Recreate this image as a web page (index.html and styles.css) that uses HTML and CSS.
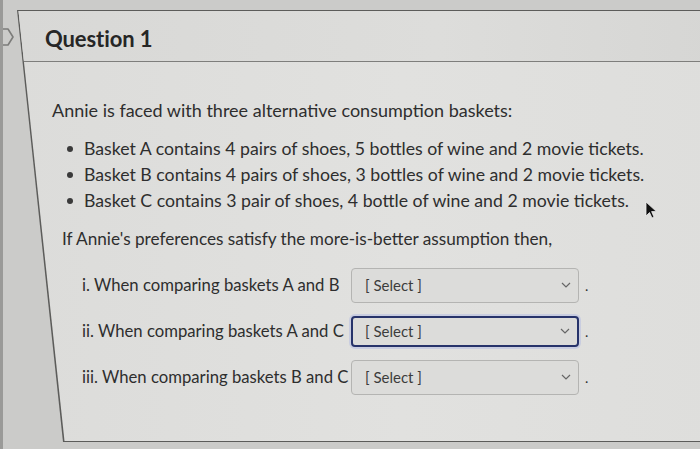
FILE: index.html
```html
<!DOCTYPE html>
<html lang="en">
<head>
<meta charset="utf-8">
<title>Question 1</title>
<link rel="stylesheet" href="styles.css">
</head>
<body>
<div class="page">
  <div class="rail">
    <svg class="rail-icon" width="12" height="20" viewBox="0 0 12 20">
      <path d="M-2 2 L5 2 L10 10 L5 18 L-2 18" fill="none" stroke="#7c7c7a" stroke-width="1.6" stroke-linejoin="round"/>
    </svg>
  </div>
  <div class="card">
    <div class="card-inner">
      <div class="card-header">
        <h2 class="title">Question 1</h2>
      </div>
      <div class="card-body">
        <p class="intro">Annie is faced with three alternative consumption baskets:</p>
        <ul class="baskets">
          <li>Basket A contains 4 pairs of shoes, 5 bottles of wine and 2 movie tickets.</li>
          <li>Basket B contains 4 pairs of shoes, 3 bottles of wine and 2 movie tickets.</li>
          <li>Basket C contains 3 pair of shoes, 4 bottle of wine and 2 movie tickets.</li>
        </ul>
        <p class="lead">If Annie's preferences satisfy the more-is-better assumption then,</p>
        <div class="rows">
          <div class="row">
            <span class="label">i. When comparing baskets A and B</span>
            <span class="select"><span>[ Select ]</span><svg class="chev" width="10" height="6" viewBox="0 0 10 6"><path d="M1 1 L5 5 L9 1" fill="none" stroke="#666" stroke-width="1.2"/></svg></span>
            <span class="dot">.</span>
          </div>
          <div class="row">
            <span class="label">ii. When comparing baskets A and C</span>
            <span class="select focused"><span>[ Select ]</span><svg class="chev" width="10" height="6" viewBox="0 0 10 6"><path d="M1 1 L5 5 L9 1" fill="none" stroke="#666" stroke-width="1.2"/></svg></span>
            <span class="dot">.</span>
          </div>
          <div class="row">
            <span class="label">iii. When comparing baskets B and C</span>
            <span class="select"><span>[ Select ]</span><svg class="chev" width="10" height="6" viewBox="0 0 10 6"><path d="M1 1 L5 5 L9 1" fill="none" stroke="#666" stroke-width="1.2"/></svg></span>
            <span class="dot">.</span>
          </div>
        </div>
      </div>
    </div>
  </div>
</div>
<svg class="cursor" width="14" height="20" viewBox="0 0 14 20">
  <path d="M1 1 L1 15 L4.5 11.5 L7 17 L9 16 L6.6 10.6 L11.5 10.6 Z" fill="#111" stroke="#eee" stroke-width="0.8"/>
</svg>
</body>
</html>
```
FILE: styles.css
```css
html, body {
  margin: 0;
  padding: 0;
}
body {
  width: 700px;
  height: 449px;
  overflow: hidden;
  background: #cbcbc9;
  font-family: "Lato", "Liberation Sans", sans-serif;
  color: #2e2e2e;
  position: relative;
}
.page {
  display: flex;
  height: 449px;
  border-left: 3px solid #9a9a98;
}
.rail {
  width: 14px;
  flex: none;
  padding-top: 27px;
}
.rail-icon {
  display: block;
}
.card {
  flex: none;
  width: 700px;
  margin-top: 10px;
  height: 432px;
  background: #5c5c5a;
  clip-path: polygon(0 0, 100% 0, 100% 100%, 46px 100%);
  padding: 1px 0;
  box-sizing: border-box;
}
.card-inner {
  height: 100%;
  background: linear-gradient(90deg, #dcdcda 0%, #e1e1df 55%, #dededc 100%);
  clip-path: polygon(1.5px 0, 100% 0, 100% 100%, 47.5px 100%);
}
.card-header {
  height: 51px;
  box-sizing: border-box;
  border-bottom: 1px solid #7e7e7c;
  background: linear-gradient(90deg, #d8d8d6 0%, #dddddb 60%, #d6d6d4 100%);
  padding: 5px 0 0 28px;
  display: flex;
  align-items: center;
}
.title {
  margin: 0;
  font-size: 22px;
  font-weight: 700;
  color: #262626;
  letter-spacing: -0.1px;
}
.card-body {
  padding: 36px 0 0 35px;
}
.intro, .lead {
  margin: 0;
  font-size: 18px;
  line-height: 24px;
}
.baskets {
  margin: 14px 0 0;
  padding-left: 32px;
  font-size: 17.7px;
  line-height: 25.8px;
  list-style: none;
}
.baskets li {
  position: relative;
}
.baskets li::before {
  content: "";
  position: absolute;
  left: -17px;
  top: 10px;
  width: 6px;
  height: 6px;
  border-radius: 50%;
  background: #3a3a3a;
}
.lead {
  margin-top: 14px;
  margin-left: 10px;
  font-size: 17.2px;
}
.rows {
  margin-top: 11px;
  padding-left: 30px;
  display: flex;
  flex-direction: column;
}
.row {
  height: 46px;
  display: flex;
  align-items: center;
  font-size: 16.7px;
}
.label {
  flex: none;
  width: 269px;
  white-space: nowrap;
}
.select {
  width: 228px;
  height: 35px;
  box-sizing: border-box;
  border: 1px solid #b4b4b2;
  border-radius: 4px;
  background: #dcdcda;
  display: flex;
  align-items: center;
  justify-content: space-between;
  padding: 0 7px 0 13px;
  font-size: 15px;
  color: #3c3c3c;
}
.select.focused {
  border: 2px solid #27336a;
  box-shadow: 0 0 0 2px #c9cde0;
  height: 31px;
  padding-left: 12px;
}
.dot {
  margin-left: 6px;
  font-size: 14px;
}
.cursor {
  position: absolute;
  left: 645px;
  top: 201px;
}
```
